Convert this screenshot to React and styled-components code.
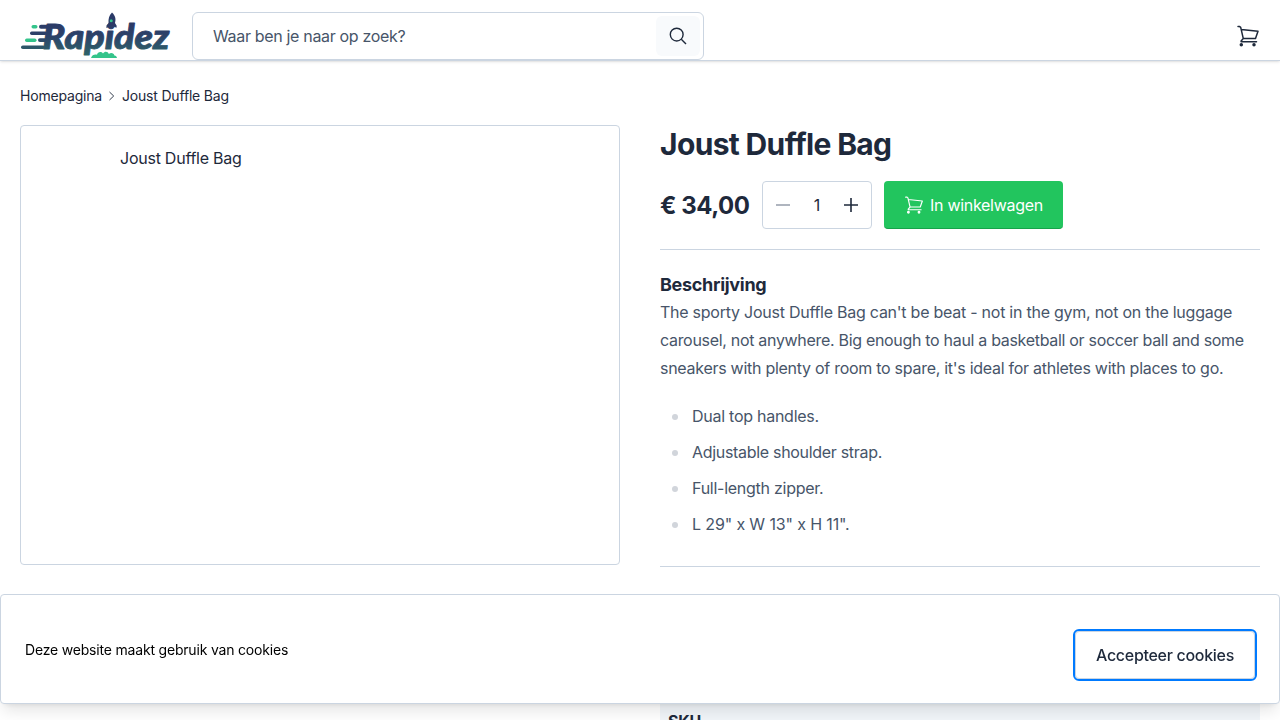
import React from 'react';
import styled, { createGlobalStyle } from 'styled-components';

const ink = '#1e293b';
const muted = '#475569';
const line = '#cbd5e1';

const GlobalStyle = createGlobalStyle`
  *, *::before, *::after { box-sizing: border-box; }
  html, body { margin: 0; height: 720px; overflow: hidden; background: #fff; }
  body { font-family: Inter, "Liberation Sans", sans-serif; font-size: 16px; line-height: 24px; letter-spacing: -0.25px; color: ${ink}; }
  h1, h2, p, ul { margin: 0; padding: 0; }
  button, input { font: inherit; color: inherit; letter-spacing: inherit; }
`;

const Header = styled.header`
  display: flex;
  align-items: flex-start;
  height: 61px;
  padding: 12px 20px 0;
  border-bottom: 1px solid ${line};
  box-shadow: 0 1px 3px rgba(0, 0, 0, 0.1), 0 1px 2px -1px rgba(0, 0, 0, 0.1);
`;
const LogoLink = styled.a`
  display: block;
  width: 150px;
  height: 46px;
  margin-right: 22px;
`;
const Search = styled.form`
  display: flex;
  align-items: center;
  width: 512px;
  height: 48px;
  padding: 0 3px 0 20px;
  border: 1px solid ${line};
  border-radius: 6px;
`;
const SearchInput = styled.input`
  flex: 1;
  min-width: 0;
  padding: 0;
  border: 0;
  outline: 0;
  background: transparent;
  letter-spacing: -0.33px;
  &::placeholder { color: ${muted}; opacity: 1; }
`;
const SearchButton = styled.button`
  display: grid;
  place-items: center;
  width: 44px;
  height: 40px;
  padding: 0;
  border: 0;
  border-radius: 6px;
  background: #f8fafc;
`;
const CartLink = styled.a`
  display: flex;
  margin-left: auto;
  padding-top: 12px;
`;

const Breadcrumbs = styled.nav`
  display: flex;
  align-items: center;
  gap: 5px;
  padding: 25px 20px 19px;
  font-size: 14px;
  line-height: 20px;
  letter-spacing: -0.19px;
`;
const Product = styled.main`
  display: grid;
  grid-template-columns: 600px 600px;
  gap: 40px;
  padding: 0 20px;
`;
const Gallery = styled.div`
  height: 440px;
  padding: 20px 99px;
  border: 1px solid ${line};
  border-radius: 4px;
`;
const Details = styled.section`
  display: flex;
  flex-direction: column;
`;
const Title = styled.h1`
  font-size: 30px;
  line-height: 36px;
  font-weight: 700;
  letter-spacing: -0.65px;
  padding: 1px 0;
`;
const BuyRow = styled.div`
  display: flex;
  align-items: center;
  gap: 12px;
  padding: 18px 0 20px;
  border-bottom: 1px solid ${line};
`;
const Price = styled.span`
  width: 90px;
  padding-top: 2px;
  font-size: 24px;
  line-height: 32px;
  font-weight: 700;
  letter-spacing: -0.45px;
  white-space: nowrap;
`;
const Stepper = styled.div`
  display: flex;
  align-items: center;
  justify-content: space-between;
  width: 110px;
  height: 48px;
  padding: 0 12px;
  border: 1px solid ${line};
  border-radius: 4px;
`;
const AddButton = styled.button`
  display: flex;
  align-items: center;
  gap: 6px;
  width: 179px;
  height: 48px;
  padding: 0 0 0 20px;
  border: 0;
  border-bottom: 1px solid #16a34a;
  border-radius: 4px;
  background: #22c55e;
  color: #fff;
  letter-spacing: -0.29px;
  white-space: nowrap;
`;
const Description = styled.div`
  height: 317px;
  padding-top: 21px;
  border-bottom: 1px solid ${line};
  color: ${muted};
  line-height: 28px;
`;
const Phrase = styled.span`
  letter-spacing: ${({ $tracking }) => $tracking}px;
`;
const SubTitle = styled.h2`
  height: 27px;
  font-size: 18px;
  line-height: 28px;
  font-weight: 700;
  letter-spacing: -0.3px;
  color: ${ink};
`;
const Features = styled.ul`
  margin-top: 20px;
  list-style: none;
`;
const Feature = styled.li`
  display: flex;
  align-items: center;
  gap: 14px;
  margin-bottom: 8px;
  padding-left: 12px;
  letter-spacing: ${({ $tracking = -0.26 }) => $tracking}px;
  &::before {
    content: "";
    width: 6px;
    height: 6px;
    margin-top: 2px;
    border-radius: 50%;
    background: #d1d5db;
  }
`;
const Specs = styled.div`
  padding-top: 22px;
`;
const SpecRow = styled.div`
  margin-top: 84px;
  padding: 9px 8px;
  background: #f1f5f9;
  font-weight: 700;
`;

const CookieBar = styled.aside`
  position: fixed;
  left: 0;
  right: 0;
  bottom: 16px;
  display: flex;
  justify-content: space-between;
  height: 110px;
  padding: 35px 24px 24px;
  border: 1px solid ${line};
  border-radius: 4px;
  background: #fff;
  box-shadow: 0 10px 15px -3px rgba(0, 0, 0, 0.1), 0 4px 6px -4px rgba(0, 0, 0, 0.1);
`;
const CookieText = styled.p`
  padding-top: 10px;
  font-size: 14px;
  line-height: 20px;
  letter-spacing: -0.19px;
  color: #000;
`;
const AcceptButton = styled.button`
  width: 180px;
  height: 48px;
  margin-top: 1px;
  padding: 0;
  border: 1px solid ${line};
  border-radius: 4px;
  background: #fff;
  font-weight: 500;
  letter-spacing: -0.3px;
  outline: 2px solid #007aff;
`;

const LogoSvg = styled.svg`
  display: block;
  overflow: visible;
`;
const LogoWord = styled.text`
  font-family: Lato, "Open Sans", sans-serif;
  font-size: 34px;
  font-weight: 900;
  font-style: italic;
  letter-spacing: 0;
  stroke-width: 0.9px;
  stroke-linejoin: round;
`;

function Logo() {
  return (
    <LogoSvg width="150" height="46" viewBox="0 0 150 46" aria-label="Rapidez">
      <defs>
        <linearGradient id="navy" gradientUnits="userSpaceOnUse" x1="0" y1="12" x2="0" y2="46">
          <stop offset="0" stopColor="#2b3a67" />
          <stop offset="0.35" stopColor="#2c4269" />
          <stop offset="1" stopColor="#2f6868" />
        </linearGradient>
      </defs>
      <g fill="url(#navy)">
        <rect x="19" y="12.800" width="20" height="4" rx="2" />
        <rect x="10" y="19.500" width="17" height="3.500" rx="1.700" />
        <rect x="18" y="26.200" width="9" height="3.800" rx="1.900" />
        <rect x="1" y="33.400" width="24" height="3.600" rx="1.800" />
      </g>
      <g fill="#34c48b">
        <rect x="11.500" y="13" width="6" height="3.400" rx="1.700" />
        <rect x="5" y="26.500" width="11.500" height="3.500" rx="1.700" />
      </g>
      <LogoWord x="22.500" y="36.800" fill="url(#navy)" stroke="url(#navy)" textLength="127" lengthAdjust="spacingAndGlyphs">Rapidez</LogoWord>
      <path d="M92 .5c3.800 3.500 4 7 3 10.500l1.700 2.800-.2 2-3-1.300h-3.300L86.400 16l.1-2.500 2-2.300C88.300 6.800 89 3.500 92 .5z" fill="url(#navy)" />
      <circle cx="91.200" cy="8.700" r="1.500" fill="#34c48b" />
      <path d="M71 46c1-3 3.500-4 6-3.300.6-3 4.400-3.400 6-1.200 1.700-2.500 5-2 5.800.4 2.500-1.600 5.200-.6 5.500 1.500 1.300-.2 2.500 1 2.700 2.600z" fill="#34c48b" />
    </LogoSvg>
  );
}

function CartIcon({ size, weight }) {
  return (
    <svg width={size} height={size} viewBox="0 0 24 24" fill="none" stroke="currentColor" strokeWidth={weight} strokeLinejoin="round" strokeLinecap="round">
      <path d="M2 2.600h1.700l1 .8L7.300 14.600M5.300 5.400L22 7.200l-2.500 7.200H7.300l-2.200 2.500v.8h15.400" />
      <circle cx="5.300" cy="20.700" r="1" fill="currentColor" />
      <circle cx="18" cy="20.700" r="1" fill="currentColor" />
    </svg>
  );
}

const Sign = ({ plus, color }) => (
  <svg width="16" height="16" viewBox="0 0 16 16" fill="none" stroke={color} strokeWidth="1.600">
    <path d={plus ? 'M1 8h14M8 1v14' : 'M1 8h14'} />
  </svg>
);

export default function App() {
  return (
    <>
      <GlobalStyle />
      <Header>
        <LogoLink><Logo /></LogoLink>
        <Search>
          <SearchInput placeholder="Waar ben je naar op zoek?" />
          <SearchButton aria-label="Zoeken">
            <svg width="18" height="18" viewBox="0 0 18 18" fill="none" stroke={ink} strokeWidth="1.4">
              <circle cx="7.700" cy="7.600" r="6.400" />
              <path d="M12.300 12.200l4.700 4.700" />
            </svg>
          </SearchButton>
        </Search>
        <CartLink><CartIcon size={24} weight={1.5} /></CartLink>
      </Header>
      <Breadcrumbs>
        <span>Homepagina</span>
        <svg width="10" height="10" viewBox="0 0 10 10" fill="none" stroke={ink} strokeWidth="0.9">
          <path d="M2.500 1l4.200 4-4.200 4" />
        </svg>
        <span>Joust Duffle Bag</span>
      </Breadcrumbs>
      <Product>
        <Gallery>Joust Duffle Bag</Gallery>
        <Details>
          <Title>Joust Duffle Bag</Title>
          <BuyRow>
            <Price>€ 34,00</Price>
            <Stepper>
              <Sign color="#9ca3af" />
              <span>1</span>
              <Sign plus color={ink} />
            </Stepper>
            <AddButton><CartIcon size={20} weight={1.4} />In winkelwagen</AddButton>
          </BuyRow>
          <Description>
            <SubTitle>Beschrijving</SubTitle>
            <p>
              The sporty Joust Duffle Bag can't be beat - not in the gym, not on the luggage{' '}
              <Phrase $tracking={-0.31}>carousel, not anywhere. Big enough to haul a basketball or soccer ball and some</Phrase>{' '}
              <Phrase $tracking={-0.275}>sneakers with plenty of room to spare, it's ideal for athletes with places to go.</Phrase>
            </p>
            <Features>
              <Feature>Dual top handles.</Feature>
              <Feature $tracking={-0.31}>Adjustable shoulder strap.</Feature>
              <Feature>Full-length zipper.</Feature>
              <Feature $tracking={-0.13}>L 29" x W 13" x H 11".</Feature>
            </Features>
          </Description>
          <Specs>
            <SubTitle>Specificaties</SubTitle>
            <SpecRow>SKU</SpecRow>
          </Specs>
        </Details>
      </Product>
      <CookieBar>
        <CookieText>Deze website maakt gebruik van cookies</CookieText>
        <AcceptButton>Accepteer cookies</AcceptButton>
      </CookieBar>
    </>
  );
}
